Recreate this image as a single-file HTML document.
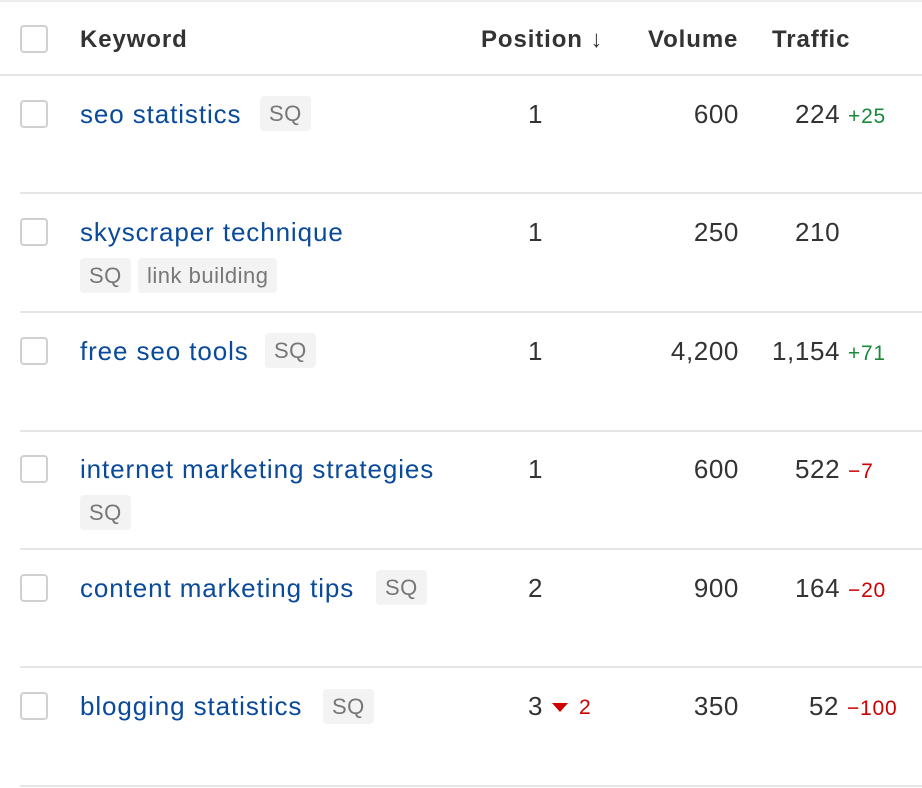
<!DOCTYPE html>
<html><head><meta charset="utf-8"><style>
body{margin:0;width:922px;height:788px;background:#fff;font-family:"Liberation Sans",Arial,sans-serif;color:#333;position:relative;overflow:hidden}
.a{position:absolute;white-space:nowrap}
.cb{position:absolute;left:20px;width:24px;height:24px;border:2px solid #d0d0d0;border-radius:4px;background:#fff}
.line{position:absolute;left:20px;right:0;height:2px;background:#e6e6e6}
.h{font-size:24px;font-weight:bold;color:#333;top:26px;letter-spacing:0.9px}
.kw{font-size:26px;color:#0a4a9a;left:80px;letter-spacing:0.9px}
.tag{position:absolute;height:35px;line-height:35px;padding:0 9px;background:#f3f3f3;border-radius:4px;color:#777;font-size:22px;letter-spacing:0.5px}
.num{font-size:26px;color:#333;letter-spacing:0.6px}
.r{text-align:right}
.g{color:#1a8a3a;font-size:21px;letter-spacing:0.8px}
.rd{color:#c00;font-size:21px;letter-spacing:0.8px}
</style></head><body>
<div class="line" style="top:0;left:0;background:#ececec"></div>
<div class="cb" style="top:25px"></div>
<div class="a h" style="left:80px">Keyword</div>
<div class="a h" style="left:481px">Position ↓</div>
<div class="a h" style="left:648px">Volume</div>
<div class="a h" style="left:772px">Traffic</div>
<div class="line" style="top:74px;left:0"></div>

<div class="cb" style="top:100px"></div>
<div class="a kw" style="top:99px">seo statistics</div>
<div class="tag" style="left:260px;top:96px">SQ</div>
<div class="a num" style="left:528px;top:99px">1</div>
<div class="a num r" style="right:183px;top:99px">600</div>
<div class="a num" style="left:795px;top:99px">224 <span class="g">+25</span></div>
<div class="line" style="top:192px"></div>

<div class="cb" style="top:218px"></div>
<div class="a kw" style="top:217px">skyscraper technique</div>
<div class="tag" style="left:80px;top:258px">SQ</div>
<div class="tag" style="left:138px;top:258px">link building</div>
<div class="a num" style="left:528px;top:217px">1</div>
<div class="a num r" style="right:183px;top:217px">250</div>
<div class="a num" style="left:795px;top:217px">210</div>
<div class="line" style="top:311px"></div>

<div class="cb" style="top:337px"></div>
<div class="a kw" style="top:336px">free seo tools</div>
<div class="tag" style="left:265px;top:333px">SQ</div>
<div class="a num" style="left:528px;top:336px">1</div>
<div class="a num r" style="right:183px;top:336px">4,200</div>
<div class="a num" style="left:772px;top:336px">1,154 <span class="g">+71</span></div>
<div class="line" style="top:430px"></div>

<div class="cb" style="top:455px"></div>
<div class="a kw" style="top:454px">internet marketing strategies</div>
<div class="tag" style="left:80px;top:495px">SQ</div>
<div class="a num" style="left:528px;top:454px">1</div>
<div class="a num r" style="right:183px;top:454px">600</div>
<div class="a num" style="left:795px;top:454px">522 <span class="rd">−7</span></div>
<div class="line" style="top:548px"></div>

<div class="cb" style="top:574px"></div>
<div class="a kw" style="top:573px">content marketing tips</div>
<div class="tag" style="left:376px;top:570px">SQ</div>
<div class="a num" style="left:528px;top:573px">2</div>
<div class="a num r" style="right:183px;top:573px">900</div>
<div class="a num" style="left:795px;top:573px">164 <span class="rd">−20</span></div>
<div class="line" style="top:666px"></div>

<div class="cb" style="top:692px"></div>
<div class="a kw" style="top:691px">blogging statistics</div>
<div class="tag" style="left:323px;top:689px">SQ</div>
<div class="a num" style="left:528px;top:691px">3</div>
<svg class="a" style="left:552px;top:703px" width="16" height="10"><polygon points="0,0 16,0 8,9" fill="#c00"/></svg>
<div class="a rd" style="left:579px;top:696px">2</div>
<div class="a num r" style="right:183px;top:691px">350</div>
<div class="a num" style="left:809px;top:691px">52 <span class="rd">−100</span></div>
<div class="line" style="top:785px"></div>
</body></html>
